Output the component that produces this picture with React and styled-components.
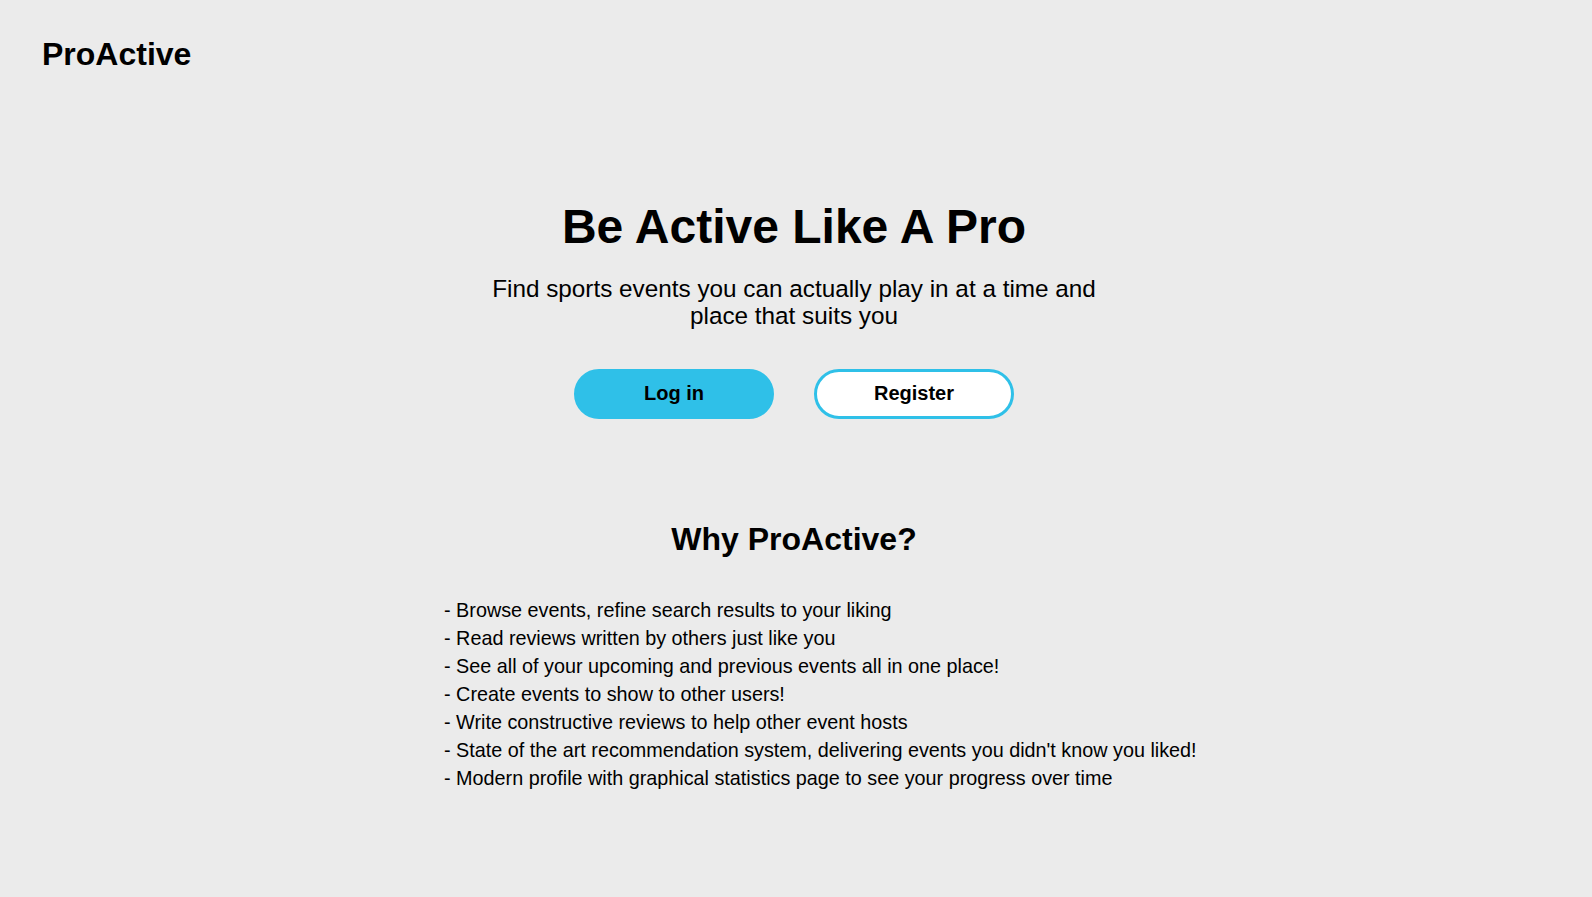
import styled, { createGlobalStyle } from "styled-components";

const GlobalStyle = createGlobalStyle`
  html, body {
    margin: 0;
    padding: 0;
    background: #ebebeb;
    font-family: "Liberation Sans", Arial, sans-serif;
    color: #000;
  }
`;

const Page = styled.div`
  min-height: 897px;
  background: #ebebeb;
`;

const Header = styled.header`
  padding: 38px 42px 0;
`;

const Logo = styled.div`
  font-size: 32px;
  font-weight: bold;
  line-height: 1;
`;

const Hero = styled.section`
  display: flex;
  flex-direction: column;
  align-items: center;
  margin-top: 131px;
  padding-right: 4px;
  text-align: center;
`;

const Title = styled.h1`
  margin: 0;
  font-size: 48px;
  font-weight: bold;
  line-height: 1.1;
`;

const Subtitle = styled.p`
  margin: 21px 0 0;
  font-size: 24.3px;
  line-height: 27.5px;
  max-width: 640px;
`;

const Buttons = styled.div`
  display: flex;
  gap: 40px;
  margin-top: 39px;
`;

const Button = styled.button`
  width: 200px;
  height: 50px;
  border-radius: 25px;
  border: 3px solid #2fc0e8;
  background: ${(p) => (p.$primary ? "#2fc0e8" : "#fff")};
  font-family: inherit;
  font-size: 20px;
  font-weight: bold;
  color: #000;
  cursor: pointer;
`;

const Why = styled.h2`
  margin: 102px 0 0;
  padding-right: 4px;
  font-size: 32px;
  font-weight: bold;
  text-align: center;
`;

const List = styled.ul`
  list-style: none;
  width: 704px;
  margin: 38px auto 0;
  padding: 0;
  white-space: nowrap;
`;

const Item = styled.li`
  font-size: 19.8px;
  line-height: 28px;
`;

const features = [
  "Browse events, refine search results to your liking",
  "Read reviews written by others just like you",
  "See all of your upcoming and previous events all in one place!",
  "Create events to show to other users!",
  "Write constructive reviews to help other event hosts",
  "State of the art recommendation system, delivering events you didn't know you liked!",
  "Modern profile with graphical statistics page to see your progress over time",
];

export default function App() {
  return (
    <Page>
      <GlobalStyle />
      <Header>
        <Logo>ProActive</Logo>
      </Header>
      <Hero>
        <Title>Be Active Like A Pro</Title>
        <Subtitle>
          Find sports events you can actually play in at a time and place that
          suits you
        </Subtitle>
        <Buttons>
          <Button $primary>Log in</Button>
          <Button>Register</Button>
        </Buttons>
      </Hero>
      <Why>Why ProActive?</Why>
      <List>
        {features.map((f) => (
          <Item key={f}>- {f}</Item>
        ))}
      </List>
    </Page>
  );
}
